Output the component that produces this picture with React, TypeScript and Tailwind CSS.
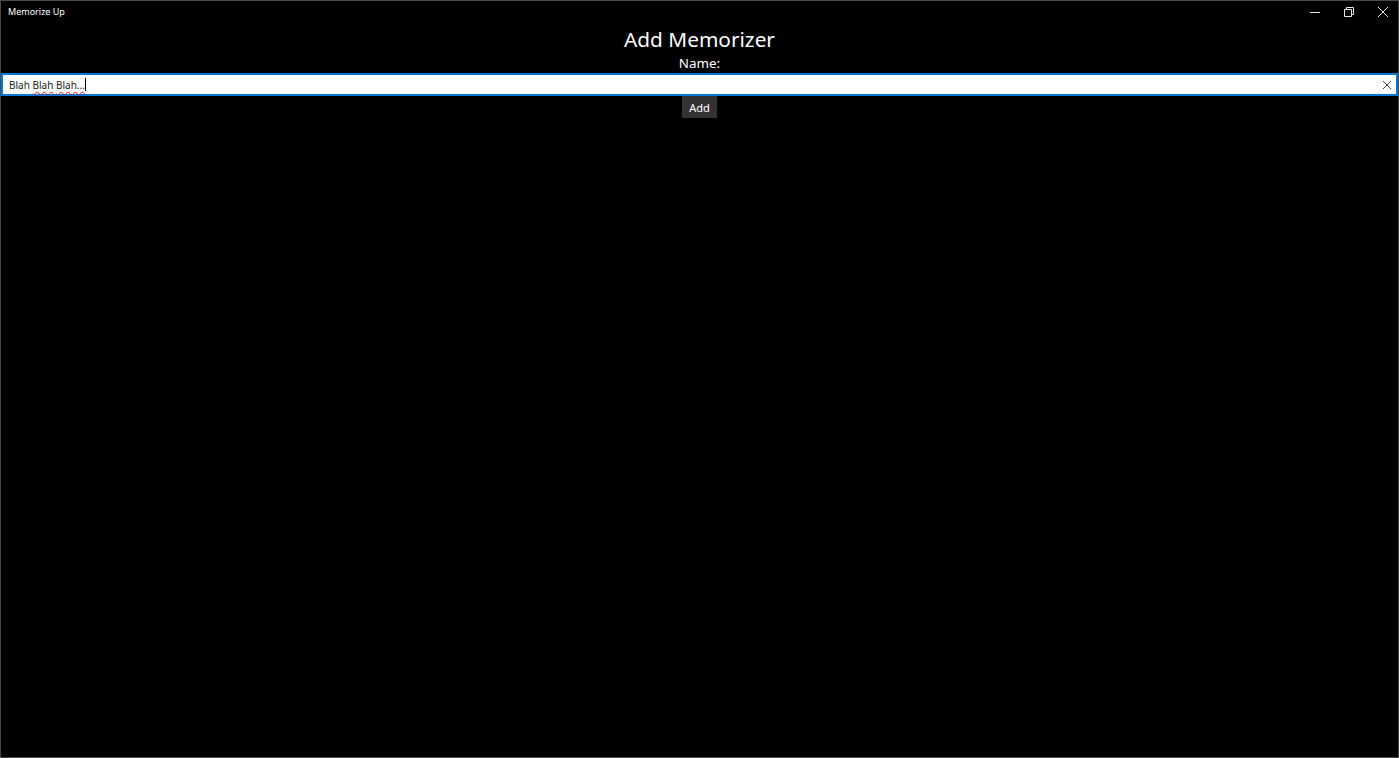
import React from 'react';

export default function App() {
  return (
    <div
      className="relative w-full h-[758px] bg-black border border-[#4a4a4a] overflow-hidden"
      style={{ fontFamily: '"Noto Sans", "Open Sans", sans-serif' }}
    >
      {/* Title bar */}
      <div className="flex items-center h-[21px] pl-[7px]">
        <span className="text-[9px] text-white leading-none">Memorize Up</span>
        <div className="ml-auto flex h-full">
          <div className="w-[34px] flex items-center justify-center">
            <svg width="10" height="10" viewBox="0 0 10 10">
              <path d="M0 5.5h10" stroke="#e6e6e6" strokeWidth="1" />
            </svg>
          </div>
          <div className="w-[34px] flex items-center justify-center">
            <svg width="10" height="10" viewBox="0 0 10 10" fill="none" stroke="#e6e6e6" strokeWidth="1">
              <path d="M0.5 2.5h7v7h-7z" />
              <path d="M2.5 2.5v-2h7v7h-2" />
            </svg>
          </div>
          <div className="w-[34px] flex items-center justify-center mr-[-2px]">
            <svg width="10" height="10" viewBox="0 0 10 10" stroke="#e6e6e6" strokeWidth="1">
              <path d="M0 0l10 10M10 0L0 10" />
            </svg>
          </div>
        </div>
      </div>

      {/* Content */}
      <div className="flex flex-col items-center">
        <h1 className="text-[20.8px] text-white leading-[26px] mt-[4px]">Add Memorizer</h1>
        <div className="text-[13.4px] text-white leading-[18px] mt-[2px]">Name:</div>
        <div className="w-full h-[23px] mt-[1px] bg-white border-2 border-[#0078d7] flex items-center pl-[6px] pr-[1px]">
          <span className="text-[10px] text-[#222] leading-none">
            Blah{' '}
            <span className="underline decoration-wavy decoration-[#e81123] underline-offset-[2px]">Blah</span>{' '}
            <span className="underline decoration-wavy decoration-[#e81123] underline-offset-[2px]">Blah...</span>
          </span>
          <span className="inline-block w-[1px] h-[13px] bg-black"></span>
          <div className="ml-auto flex items-center justify-center w-[16px]">
            <svg width="8" height="8" viewBox="0 0 8 8" stroke="#444" strokeWidth="1">
              <path d="M0 0l8 8M8 0L0 8" />
            </svg>
          </div>
        </div>
        <button className="h-[22px] px-[7px] bg-[#333333] text-white text-[11px] leading-none">
          Add
        </button>
      </div>
    </div>
  );
}
